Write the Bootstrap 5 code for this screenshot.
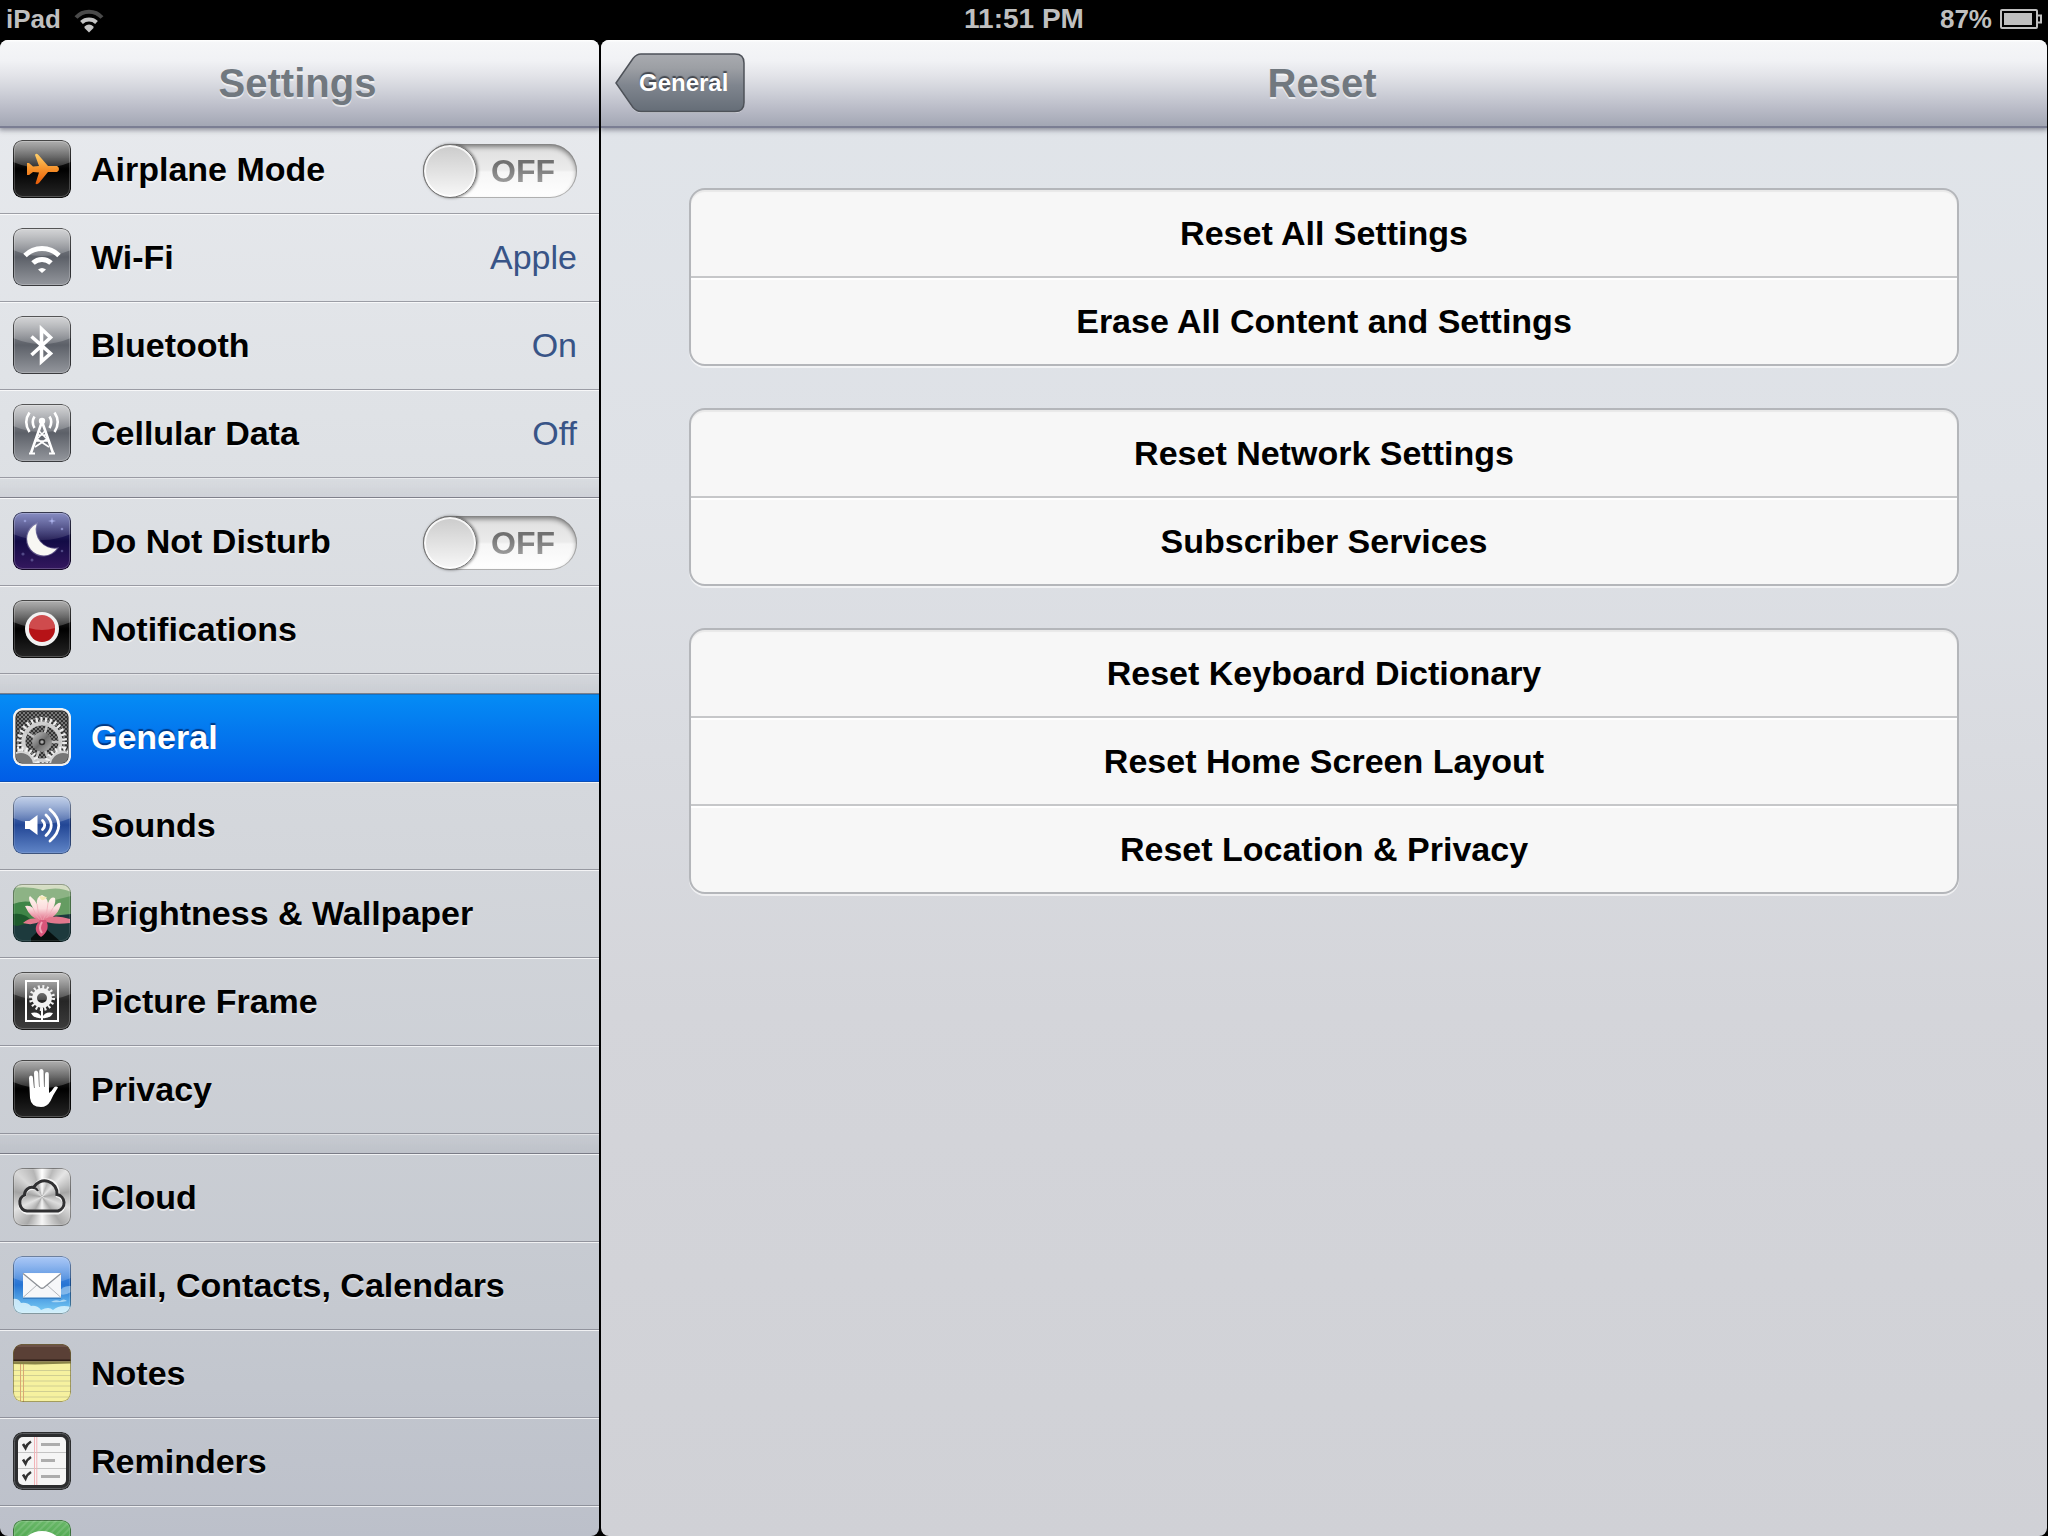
<!DOCTYPE html>
<html lang="en">
<head>
<meta charset="utf-8">
<meta name="viewport" content="width=device-width, initial-scale=1">
<title>Settings</title>
<link rel="stylesheet" href="https://cdn.jsdelivr.net/npm/bootstrap@5.3.0/dist/css/bootstrap.min.css">
<style>
  body { background: #000; font-family: "Liberation Sans", Arial, sans-serif; font-weight: 700; font-size: 34px; line-height: 40px; color: #000; }
  .status-bar { flex: 0 0 40px; padding: 0 6px 2px; font-size: 26px; line-height: 30px; color: #bfbfbf; display: grid; grid-template-columns: 1fr auto 1fr; align-items: center; }
  .clock { font-size: 28px; }
  .panes { gap: 2px; padding-right: 1px; min-height: 0; }
  .pane { border-radius: 8px; overflow: hidden; }
  .side { flex: 0 0 599px; background: linear-gradient(#e9ebef, #dfe2e6 25%, #d3d6db 55%, #c5c9d0 85%, #bcc0ca); }
  .content { background: linear-gradient(#e1e5ea, #dee1e6 30%, #d4d5da 65%, #d0d1d6); }
  .bar { flex: 0 0 86px; z-index: 1; padding: 0 14px; display: grid; grid-template-columns: 1fr auto 1fr; align-items: center;
    background: linear-gradient(#fff, #f5f6f8 3%, #f1f2f5 24%, #e2e3e8 42%, #cfd1d9 60%, #b7b9c5 82%, #a3a7b4);
    box-shadow: 0 2px 0 #7b7e93, 0 3px 5px 1px rgba(60,62,80,.55); }
  .bar h1 { grid-column: 2; margin: 0; padding-right: 4px; font-size: 40px; font-weight: 700; line-height: 48px; color: #71787f; text-shadow: 0 2px 0 rgba(255,255,255,.6); }
  .back { justify-self: start; width: 132px; height: 60px; padding: 0; border: 0; color: #fff; font-size: 24px; font-weight: 700; display: grid; background: none; }
  .back > * { grid-area: 1 / 1; }
  .back span { align-self: center; padding-left: 24px; text-align: left; line-height: 28px; text-shadow: 0 -2px 1px rgba(40,44,52,.75); }
  .setting { height: 88px; gap: 20px; padding: 0 22px 2px 13px; color: #000; background: transparent; text-shadow: 0 2px 0 rgba(255,255,255,.5); }
  .list-group-flush > .list-group-item.setting { border-width: 1px 0; border-style: solid; border-color: rgba(255,255,255,.75) transparent rgba(118,120,130,.65); }
  .list-group-item.setting + .list-group-item.setting { margin-top: 0; }
  .list-group-flush > .list-group-item.setting.active { color: #fff; background: linear-gradient(#058cf5, #015de6); border-color: #1471c4 transparent #0b50b8; text-shadow: 0 -2px 1px rgba(0,20,70,.65); }
  .setting .state { color: #385487; font-weight: 400; text-shadow: none; }
  .group-gap { height: 20px; border-top: 1px solid rgba(255,255,255,.5); border-bottom: 1px solid rgba(90,92,104,.7); background: linear-gradient(rgba(90,95,110,.03), rgba(90,95,110,.11)); }
  .tile { width: 58px; height: 58px; border-radius: 9px; flex: none; }
  .brushed { background: conic-gradient(#fff, #b9b9b9 6%, #e5e5e5 12%, #a5a5a5 22%, #ddd 31%, #aaa 40%, #f6f6f6 50%, #a9a9a9 58%, #e2e2e2 68%, #a3a3a3 78%, #d8d8d8 87%, #b5b5b5 95%, #fff); }
  .toggle { width: 154px; height: 54px; margin-top: 4px; gap: 14px; border-radius: 27px; background: linear-gradient(#dedede, #ebebeb 48%, #f6f6f6 52%, #fff); box-shadow: inset 0 0 0 1px rgba(130,130,130,.6), inset 0 3px 5px rgba(0,0,0,.45); color: #7d7d7d; font-size: 32px; line-height: 36px; text-shadow: none; }
  .toggle input { appearance: none; width: 54px; height: 54px; margin: 0; border: 1px solid #6f6f6f; border-radius: 50%; background: linear-gradient(#cbcbcb, #f8f8f8); box-shadow: inset 0 0 0 2px rgba(255,255,255,.8), 1px 0 3px rgba(0,0,0,.5); }
  .toggle span { color: transparent; background: linear-gradient(#707070 30%, #9a9a9a 80%); background-clip: text; -webkit-background-clip: text; }
  .sheet { padding: 62px 88px; gap: 42px; }
  .actions { border: 2px solid #b4b6ba; border-radius: 16px; background: #f7f7f7; box-shadow: 0 2px 0 rgba(255,255,255,.6), inset 0 2px 1px rgba(0,0,0,.06); overflow: hidden; }
  .actions .list-group-item { height: 88px; padding: 2px 0; border: 0; border-bottom: 2px solid #c6c7c9; background: transparent; color: #000; text-align: center; font-weight: 700; }
  .actions .list-group-item + .list-group-item { box-shadow: inset 0 2px 0 #fff; }
  .actions .list-group-item:last-child { height: 86px; border-bottom: 0; }
</style>
<script src="https://cdn.jsdelivr.net/npm/bootstrap@5.3.0/dist/js/bootstrap.bundle.min.js"></script>
</head>
<body class="vh-100 overflow-hidden d-flex flex-column">

<svg width="0" height="0" class="position-absolute" aria-hidden="true">
  <defs>
    <linearGradient id="gBlack" x2="0" y2="1"><stop offset="0" stop-color="#555"/><stop offset=".5" stop-color="#000"/><stop offset="1" stop-color="#262626"/></linearGradient>
    <linearGradient id="gDark" x2="0" y2="1"><stop offset="0" stop-color="#777"/><stop offset=".5" stop-color="#262626"/><stop offset="1" stop-color="#3d3d3d"/></linearGradient>
    <linearGradient id="gGray" x2="0" y2="1"><stop offset="0" stop-color="#a2a4a8"/><stop offset=".5" stop-color="#5c6068"/><stop offset="1" stop-color="#95989e"/></linearGradient>
    <linearGradient id="gNight" x2="0" y2="1"><stop offset="0" stop-color="#5059a8"/><stop offset=".5" stop-color="#120b45"/><stop offset="1" stop-color="#35185f"/></linearGradient>
    <linearGradient id="gBlue" x2="0" y2="1"><stop offset="0" stop-color="#7b9ad0"/><stop offset=".5" stop-color="#224695"/><stop offset="1" stop-color="#6287c8"/></linearGradient>
    <linearGradient id="gMail" x2="0" y2="1"><stop offset="0" stop-color="#6c9ff0"/><stop offset=".5" stop-color="#2674d3"/><stop offset="1" stop-color="#7fd3f7"/></linearGradient>
    <linearGradient id="gGreen" x2="0" y2="1"><stop offset="0" stop-color="#6ab869"/><stop offset="1" stop-color="#1f8a22"/></linearGradient>
    <linearGradient id="gOrange" x2="0" y2="1"><stop offset="0" stop-color="#ffd06a"/><stop offset=".5" stop-color="#f6922b"/><stop offset="1" stop-color="#e65a08"/></linearGradient>
    <linearGradient id="gShine" x2="0" y2="1"><stop offset="0" stop-color="#fff" stop-opacity=".55"/><stop offset="1" stop-color="#fff" stop-opacity=".16"/></linearGradient>
    <linearGradient id="gMetal" x2="1" y2="1"><stop offset="0" stop-color="#c8c8c8"/><stop offset=".5" stop-color="#6d6d6d"/><stop offset="1" stop-color="#b5b5b5"/></linearGradient>
    <linearGradient id="gPetal" x2="0" y2="1"><stop offset="0" stop-color="#fff8ee"/><stop offset=".5" stop-color="#fbdcdd"/><stop offset="1" stop-color="#dd5c7c"/></linearGradient>
    <linearGradient id="gBack" x2="0" y2="1"><stop offset="0" stop-color="#a9abb0"/><stop offset=".25" stop-color="#9c9fa4"/><stop offset=".55" stop-color="#7f858e"/><stop offset="1" stop-color="#656d77"/></linearGradient>
    <pattern id="pMesh" width="4" height="4" patternUnits="userSpaceOnUse"><rect width="4" height="4" fill="#777"/><circle cx="1" cy="1" r="1" fill="#1c1c1c"/><circle cx="3" cy="3" r="1" fill="#1c1c1c"/></pattern>
    <pattern id="pStripe" width="5" height="5" patternUnits="userSpaceOnUse" patternTransform="rotate(45)"><rect width="2" height="5" fill="#fff" opacity=".12"/></pattern>
    <clipPath id="cTile"><rect width="58" height="58" rx="9"/></clipPath>
    <path id="shine" d="M0 0H58V22Q29 34 0 22Z" fill="url(#gShine)"/>
    <g id="rim" fill="none"><rect x="1.5" y="1.5" width="55" height="55" rx="8" stroke="#fff" stroke-opacity=".22"/><rect x=".5" y=".5" width="57" height="57" rx="8.5" stroke="#000" stroke-opacity=".6"/></g>
  </defs>
</svg>

<header class="status-bar">
  <div class="d-flex align-items-center">
    <span>iPad</span>
    <svg class="ms-2" width="44" height="30" viewBox="0 0 44 30" role="img" aria-label="Wi-Fi signal">
      <g fill="none" stroke-width="4"><path d="M7 13.500A17.500 17.500 0 0 1 33 13.500" stroke="#4a4a4a"/><path d="M12.500 18.500A11 11 0 0 1 27.500 18.500" stroke="#c4c4c4"/></g>
      <path d="M15.500 22.500Q20 18.500 24.500 22.500V24L20 28.500L15.500 24Z" fill="#c4c4c4"/>
    </svg>
  </div>
  <span class="clock">11:51 PM</span>
  <div class="d-flex align-items-center justify-content-end gap-2">
    <span>87%</span>
    <svg width="42" height="20" viewBox="0 0 42 20" role="img" aria-label="Battery"><rect x="1" y="1" width="36" height="18" rx="1" fill="none" stroke="#bfbfbf" stroke-width="2"/><rect x="4" y="4" width="28" height="12" fill="#bfbfbf"/><path d="M38 6.500H41V13.500H38" fill="none" stroke="#bfbfbf" stroke-width="2"/></svg>
  </div>
</header>

<div class="panes d-flex flex-grow-1">
  <aside class="pane side d-flex flex-column">
    <div class="bar"><h1>Settings</h1></div>
    <nav aria-label="Settings">
      <div class="list-group list-group-flush">
        <div class="list-group-item setting d-flex align-items-center">
          <svg class="tile" viewBox="0 0 58 58" aria-hidden="true"><g clip-path="url(#cTile)"><rect width="58" height="58" fill="url(#gBlack)"/><use href="#shine"/><path d="M22 15Q23 12.500 25.500 15L35 26H44Q46 27 46 29T44 32H35L26 43Q24 45 22.500 43.500L26 32.500L20 32L16 35H14V23H16L20 26.500L26 26Z" fill="url(#gOrange)"/><use href="#rim"/></g></svg>
          <label class="flex-grow-1" for="airplane">Airplane Mode</label>
          <label class="toggle d-flex align-items-center"><input type="checkbox" role="switch" id="airplane"><span>OFF</span></label>
        </div>
        <a href="#" class="list-group-item setting d-flex align-items-center">
          <svg class="tile" viewBox="0 0 58 58" aria-hidden="true"><g clip-path="url(#cTile)"><rect width="58" height="58" fill="url(#gGray)"/><use href="#shine"/><g fill="none" stroke="#fff" stroke-width="5"><path d="M12 27.500A24 24 0 0 1 46 27.500"/><path d="M20 35A13 13 0 0 1 38 35"/></g><path d="M25 41.500Q29 38.500 33 41.500L29 45Z" fill="#fff"/><use href="#rim"/></g></svg>
          <span class="flex-grow-1">Wi-Fi</span><span class="state">Apple</span>
        </a>
        <a href="#" class="list-group-item setting d-flex align-items-center">
          <svg class="tile" viewBox="0 0 58 58" aria-hidden="true"><g clip-path="url(#cTile)"><rect width="58" height="58" fill="url(#gGray)"/><use href="#shine"/><path d="M18.500 20.500L37.500 37.500L28.500 45.500V13L37.500 21.500L18.500 39" fill="none" stroke="#fff" stroke-width="3.600"/><use href="#rim"/></g></svg>
          <span class="flex-grow-1">Bluetooth</span><span class="state">On</span>
        </a>
        <a href="#" class="list-group-item setting d-flex align-items-center">
          <svg class="tile" viewBox="0 0 58 58" aria-hidden="true"><g clip-path="url(#cTile)"><rect width="58" height="58" fill="url(#gGray)"/><use href="#shine"/><circle cx="29" cy="17" r="3.200" fill="#fff"/><g fill="none" stroke="#fff" stroke-width="2.600"><path d="M28.500 19L18 49M29.500 19L40 49"/><path d="M16 49.500H22M36 49.500H42" stroke-width="2"/><path d="M26 27L34 35L22 43M32 27L24 35L36 43M25 31H33M23 37H35" stroke-width="1.700"/><path d="M21.500 12.500Q18 18 21.500 24M36.500 12.500Q40 18 36.500 24M16.500 8.500Q10 18 16.500 28M41.500 8.500Q48 18 41.500 28"/></g><use href="#rim"/></g></svg>
          <span class="flex-grow-1">Cellular Data</span><span class="state">Off</span>
        </a>
      </div>
      <div class="group-gap"></div>
      <div class="list-group list-group-flush">
        <div class="list-group-item setting d-flex align-items-center">
          <svg class="tile" viewBox="0 0 58 58" aria-hidden="true"><g clip-path="url(#cTile)"><rect width="58" height="58" fill="url(#gNight)"/><use href="#shine" opacity=".6"/><g fill="#aeb5ee"><path d="M39 5L39.700 8.300L43 9L39.700 9.700L39 13L38.300 9.700L35 9L38.300 8.300Z"/><g opacity=".6"><circle cx="12" cy="9" r="1.300"/><circle cx="49" cy="17" r="1.300"/></g><g opacity=".35"><circle cx="10" cy="42" r="1.600"/><circle cx="49" cy="39" r="1.300"/><circle cx="19" cy="48" r="1.500"/></g></g><path d="M23.500 12A16.500 16.500 0 1 0 44 36.500A19 19 0 0 1 23.500 12Z" fill="#8c86b0" opacity=".5" stroke="#9a93bd" stroke-width="2"/><path d="M23.500 12A16.500 16.500 0 1 0 44 36.500A19 19 0 0 1 23.500 12Z" fill="#f8f7f3"/><use href="#rim"/></g></svg>
          <label class="flex-grow-1" for="dnd">Do Not Disturb</label>
          <label class="toggle d-flex align-items-center"><input type="checkbox" role="switch" id="dnd"><span>OFF</span></label>
        </div>
        <a href="#" class="list-group-item setting d-flex align-items-center">
          <svg class="tile" viewBox="0 0 58 58" aria-hidden="true"><g clip-path="url(#cTile)"><rect width="58" height="58" fill="url(#gBlack)"/><use href="#shine"/><circle cx="29" cy="29" r="17" fill="#f1f1f1"/><circle cx="29" cy="29" r="13" fill="#b61317"/><path d="M16 28A13 13 0 0 1 42 28Q29 32 16 28Z" fill="#cf4b4d"/><use href="#rim"/></g></svg>
          <span>Notifications</span>
        </a>
      </div>
      <div class="group-gap"></div>
      <div class="list-group list-group-flush">
        <a href="#" class="list-group-item setting active d-flex align-items-center" aria-current="page">
          <svg class="tile" viewBox="0 0 58 58" aria-hidden="true"><g clip-path="url(#cTile)"><rect width="58" height="58" fill="#dedede"/><rect x="3" y="3" width="52" height="52" rx="6" fill="url(#pMesh)" stroke="#222"/>
            <clipPath id="cGear"><rect x="3" y="3" width="52" height="52" rx="6"/></clipPath>
            <g clip-path="url(#cGear)" fill="none"><circle cx="29" cy="34" r="22.500" stroke="#ececec" stroke-width="5" stroke-dasharray="2.200 2.512"/><circle cx="29" cy="34" r="18.500" fill="url(#pMesh)" stroke="#cfcfcf" stroke-width="4"/><g stroke="#c4c4c4" stroke-width="2.400"><path d="M29 34L34.500 16M29 34H48M29 34L13 24M29 34L22 54M29 34L36 53"/></g><circle cx="29" cy="34" r="10" fill="url(#gMetal)"/><circle cx="29" cy="34" r="2.500" fill="#aaa" stroke="#2c2c2c" stroke-width="1.500"/>
            <g id="cog"><circle cx="8" cy="57" r="16" stroke="#f0f0f0" stroke-width="5" stroke-dasharray="1.900 2.288"/><circle cx="8" cy="57" r="13" fill="#777" stroke="#d6d6d6" stroke-width="2"/></g><use href="#cog" x="42"/></g>
            <rect x="1" y="1" width="56" height="56" rx="8" fill="none" stroke="#f1f1f1" stroke-width="2"/></g></svg>
          <span>General</span>
        </a>
        <a href="#" class="list-group-item setting d-flex align-items-center">
          <svg class="tile" viewBox="0 0 58 58" aria-hidden="true"><g clip-path="url(#cTile)"><rect width="58" height="58" fill="url(#gBlue)"/><use href="#shine"/><path d="M12 25H16.500L24.500 19V39L16.500 33H12Z" fill="#fff"/><g fill="none" stroke="#fff" stroke-width="2.800" stroke-linecap="round"><path d="M29.500 24.500Q34 29 29.500 33.500M33 19Q43.500 29 33 39.500M37 13.500Q54.500 29 37 45"/></g><use href="#rim" opacity=".6"/></g></svg>
          <span>Sounds</span>
        </a>
        <a href="#" class="list-group-item setting d-flex align-items-center">
          <svg class="tile" viewBox="0 0 58 58" aria-hidden="true"><g clip-path="url(#cTile)"><rect width="58" height="58" fill="#1d3a3d"/><path d="M0 0H58V22L40 26H0Z" fill="#8db385"/><path d="M0 4Q16 2 30 6Q46 2 58 8V0H0Z" fill="#d4ddc3"/><path d="M0 20Q14 14 30 22L20 38L0 40Z" fill="#3f8547"/><path d="M34 18L58 12V30L38 32Z" fill="#659c62"/><path d="M0 30Q12 28 20 38L4 42L0 41Z" fill="#1d5a2c"/><path d="M18 54L30 42L48 58H18Z" fill="#07100f"/>
            <path d="M29 38Q17 34 12 22Q17 21 20 24Q14 14 17 12Q22 16 24 20Q23 13 29 11Q34 13 35 19Q38 12 42 14Q43 19 40 24Q45 18 48 19Q46 32 31 38Z" fill="url(#gPetal)"/><path d="M20 24Q22 32 28 37M24 20Q24 28 29 36M35 19Q35 28 30 36M40 24Q37 31 31 37" fill="none" stroke="#eeaab4" stroke-width=".7"/><path d="M26 12Q29 20 34 13Z" fill="#f5e7b4"/>
            <path d="M28 36Q18 32 10 39Q20 42 28 37ZM31 35Q42 30 57 35V39Q40 41 31 37Z" fill="#e2788d"/><path d="M27 36Q18 46 28 53Q38 46 33 36Z" fill="#d9557a"/><path d="M29 38Q25 44 29 49" stroke="#f3a3b6" stroke-width="2" fill="none"/><use href="#rim" opacity=".5"/></g></svg>
          <span>Brightness &amp; Wallpaper</span>
        </a>
        <a href="#" class="list-group-item setting d-flex align-items-center">
          <svg class="tile" viewBox="0 0 58 58" aria-hidden="true"><g clip-path="url(#cTile)"><rect width="58" height="58" fill="url(#gDark)"/><use href="#shine"/><g fill="none" stroke="#fff" stroke-width="2"><rect x="13" y="9" width="32" height="40"/><path d="M29 36V49"/><circle cx="29" cy="26" r="7.500" stroke-width="5" stroke="#f2f2f2"/><circle cx="29" cy="26" r="11" stroke-width="4" stroke-dasharray="1.900 2.420" stroke="#f2f2f2"/></g><path d="M29 46Q21 47 18 41Q26 39 29 46ZM29 46Q37 47 40 41Q32 39 29 46Z" fill="#fff"/><use href="#rim"/></g></svg>
          <span>Picture Frame</span>
        </a>
        <a href="#" class="list-group-item setting d-flex align-items-center">
          <svg class="tile" viewBox="0 0 58 58" aria-hidden="true"><g clip-path="url(#cTile)"><rect width="58" height="58" fill="url(#gBlack)"/><use href="#shine"/><path d="M17 38L16 18Q16 15.500 18 15.500T20 18L21 28H21.500L21 13Q21 10.500 23 10.500T25.300 13L26 27H26.500L26.200 11Q26.500 9 28.300 9T30.500 11L31 27H31.500L32 14Q32 12 34 12T35.800 14L36 33Q39 31 41 27.500Q43 25.500 45 27.500Q40 35 37.500 41Q34 47 28 47Q18 47 17 38Z" fill="#fff"/><use href="#rim"/></g></svg>
          <span>Privacy</span>
        </a>
      </div>
      <div class="group-gap"></div>
      <div class="list-group list-group-flush">
        <a href="#" class="list-group-item setting d-flex align-items-center">
          <svg class="tile brushed" viewBox="0 0 58 58" aria-hidden="true"><path d="M14 45A9.500 9.500 0 0 1 11.500 27.500A8 8 0 0 1 20.500 20.500A12.500 12.500 0 0 1 44.500 28A9 9 0 0 1 45 45Z" fill="none" stroke="#fff" stroke-opacity=".8" stroke-width="3"/><path d="M14 43A8.500 8.500 0 0 1 11.500 27A7.500 7.500 0 0 1 20.500 19.500A12.500 12.500 0 0 1 44 26.500A8.500 8.500 0 0 1 45 43Z" fill="none" stroke="#303032" stroke-width="3"/><path d="M20.500 19.500Q24 20.500 25 23" fill="none" stroke="#303032" stroke-width="2"/><use href="#rim" opacity=".6"/></svg>
          <span>iCloud</span>
        </a>
        <a href="#" class="list-group-item setting d-flex align-items-center">
          <svg class="tile" viewBox="0 0 58 58" aria-hidden="true"><g clip-path="url(#cTile)"><rect width="58" height="58" fill="url(#gMail)"/><use href="#shine" opacity=".8"/><path d="M0 43Q5 42 8 47Q14 46 18 50Q24 49 28 54Q36 50 40 54Q47 48 58 51V58H0Z" fill="#e4f6fd" opacity=".8"/><path d="M46 36Q50 29 58 30V36Q52 40 46 38Z" fill="#9fc9ef" opacity=".7"/><path d="M38 46Q42 43 47 45Q51 42 54 45Q47 47 38 46Z" fill="#cdeafa" opacity=".7"/><rect x="10" y="18" width="38" height="25" fill="#174f91" opacity=".4"/><rect x="10" y="17" width="38" height="24.500" fill="#f6f7f9"/><path d="M10 41.500L24 29M48 41.500L34 29" stroke="#b3b6bb" fill="none"/><path d="M10 17.500L27 31.500Q29 33 31 31.500L48 17.500" fill="#fff" stroke="#8d9197" stroke-width="1.300"/><use href="#rim" opacity=".6"/></g></svg>
          <span>Mail, Contacts, Calendars</span>
        </a>
        <a href="#" class="list-group-item setting d-flex align-items-center">
          <svg class="tile" viewBox="0 0 58 58" aria-hidden="true"><g clip-path="url(#cTile)"><rect width="58" height="58" fill="#f6f19f"/><path d="M0 26.500H58M0 31.500H58M0 37H58M0 42H58M0 47.500H58M0 53H58" stroke="#d0ce92"/><path d="M7.500 18V58M10.500 18V58" stroke="#d9a872"/><path d="M0 18H58V19.500L22 20.500L0 20Z" fill="#8a8448"/><rect width="58" height="17" fill="#5a4036"/><rect width="58" height="3" fill="#6c5147"/><rect y="15.500" width="58" height="2" fill="#2d1c16"/><rect x=".5" y=".5" width="57" height="57" rx="8.500" fill="none" stroke="#6c6432" stroke-opacity=".6"/></g></svg>
          <span>Notes</span>
        </a>
        <a href="#" class="list-group-item setting d-flex align-items-center">
          <svg class="tile" viewBox="0 0 58 58" aria-hidden="true"><rect width="58" height="58" rx="9" fill="#2c2d2f"/><rect x="1.500" y="1.500" width="55" height="55" rx="8" fill="none" stroke="#5d5f62"/><rect x="5" y="5" width="48" height="48" rx="5" fill="#f5f5f5"/><path d="M5 20.500H53M5 36.500H53" stroke="#c4c4c4"/><path d="M21.500 5V53M23.800 5V53" stroke="#f2b3b7"/><path d="M28 12.500H47M28 28.500H42M28 44.500H47" stroke="#adadad" stroke-width="3"/><g fill="none" stroke="#333" stroke-width="2.600"><path id="tick" d="M10 12L12.500 16Q14 12 18 9.500"/><use href="#tick" y="15.500"/><use href="#tick" y="30.500"/></g></svg>
          <span>Reminders</span>
        </a>
        <a href="#" class="list-group-item setting d-flex align-items-center" aria-label="Messages">
          <svg class="tile" viewBox="0 0 58 58" aria-hidden="true"><g clip-path="url(#cTile)"><rect width="58" height="58" fill="url(#gGreen)"/><rect width="58" height="58" fill="url(#pStripe)"/><ellipse cx="29" cy="27" rx="20" ry="16" fill="#fff"/><use href="#rim" opacity=".6"/></g></svg>
        </a>
      </div>
    </nav>
  </aside>

  <main class="pane content d-flex flex-column flex-grow-1">
    <div class="bar">
      <button type="button" class="back">
        <svg width="132" height="60" viewBox="0 0 132 60" aria-hidden="true"><path d="M1 31L18 6Q22 2.500 26 2.500H120Q129 2.500 129 11.500V51Q129 60 120 60H26Q22 60 18 56Z" fill="#fff" opacity=".45"/><path d="M1 30L18 5.500Q21.500 1 26 1H120Q129 1 129 10V49.500Q129 58.500 120 58.500H26Q21.500 58.500 18 54.500Z" fill="url(#gBack)" stroke="#4e5259" stroke-width="1.500"/></svg>
        <span>General</span>
      </button>
      <h1>Reset</h1>
    </div>
    <div class="sheet d-flex flex-column">
      <div class="list-group actions">
        <button type="button" class="list-group-item list-group-item-action">Reset All Settings</button>
        <button type="button" class="list-group-item list-group-item-action">Erase All Content and Settings</button>
      </div>
      <div class="list-group actions">
        <button type="button" class="list-group-item list-group-item-action">Reset Network Settings</button>
        <button type="button" class="list-group-item list-group-item-action">Subscriber Services</button>
      </div>
      <div class="list-group actions">
        <button type="button" class="list-group-item list-group-item-action">Reset Keyboard Dictionary</button>
        <button type="button" class="list-group-item list-group-item-action">Reset Home Screen Layout</button>
        <button type="button" class="list-group-item list-group-item-action">Reset Location &amp; Privacy</button>
      </div>
    </div>
  </main>
</div>
</body>
</html>
